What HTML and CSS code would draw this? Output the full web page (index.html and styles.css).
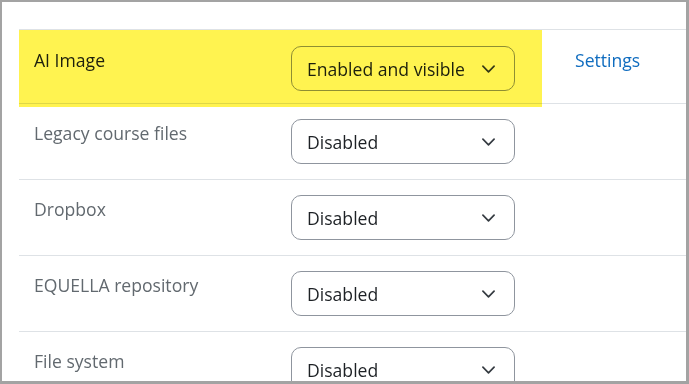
FILE: index.html
```html
<!DOCTYPE html>
<html lang="en">
<head>
    <meta charset="UTF-8">
    <meta name="viewport" content="width=device-width, initial-scale=1.0">
    <title>Manage repositories</title>
    <link rel="stylesheet" href="styles.css">
</head>
<body>
    <div class="frame">
        <div class="plugins">
            <div class="highlight"></div>

            <div class="row row-first">
                <div class="name">AI Image</div>
                <div class="state">
                    <div class="select">
                        <span>Enabled and visible</span>
                        <svg class="chevron" viewBox="0 0 14 8"><path d="M1 1l6 6 6-6"/></svg>
                    </div>
                </div>
                <div class="actions"><a href="#">Settings</a></div>
            </div>

            <div class="row">
                <div class="name muted">Legacy course files</div>
                <div class="state">
                    <div class="select">
                        <span>Disabled</span>
                        <svg class="chevron" viewBox="0 0 14 8"><path d="M1 1l6 6 6-6"/></svg>
                    </div>
                </div>
                <div class="actions"></div>
            </div>

            <div class="row">
                <div class="name muted">Dropbox</div>
                <div class="state">
                    <div class="select">
                        <span>Disabled</span>
                        <svg class="chevron" viewBox="0 0 14 8"><path d="M1 1l6 6 6-6"/></svg>
                    </div>
                </div>
                <div class="actions"></div>
            </div>

            <div class="row">
                <div class="name muted">EQUELLA repository</div>
                <div class="state">
                    <div class="select">
                        <span>Disabled</span>
                        <svg class="chevron" viewBox="0 0 14 8"><path d="M1 1l6 6 6-6"/></svg>
                    </div>
                </div>
                <div class="actions"></div>
            </div>

            <div class="row">
                <div class="name muted">File system</div>
                <div class="state">
                    <div class="select">
                        <span>Disabled</span>
                        <svg class="chevron" viewBox="0 0 14 8"><path d="M1 1l6 6 6-6"/></svg>
                    </div>
                </div>
                <div class="actions"></div>
            </div>
        </div>
    </div>
</body>
</html>
```

FILE: styles.css
```css
body {
    margin: 0;
    font-family: 'Open Sans', 'Noto Sans', Arial, sans-serif;
    font-size: 17.6px;
    color: #1d2125;
    background-color: #fff;
}

.frame {
    box-sizing: border-box;
    width: 689px;
    height: 384px;
    border: solid #a3a3a3;
    border-width: 2px 3px 3px 2px;
    padding: 27px 0 0 17px;
    overflow: hidden;
    background-color: #fff;
}

.plugins {
    position: relative;
    border-top: 1px solid #dee2e6;
}

.highlight {
    position: absolute;
    top: 0;
    left: 0;
    width: 523px;
    height: 77px;
    background-color: #fff350;
    mix-blend-mode: multiply;
    z-index: 2;
    pointer-events: none;
}

.row {
    display: flex;
    height: 75px;
    border-bottom: 1px solid #dee2e6;
}
.row-first {
    height: 73px;
}

.name {
    box-sizing: border-box;
    width: 257px;
    padding: 17px 15px 0;
    line-height: 24px;
}
.name.muted {
    color: #62696f;
}
.row-first .name,
.row-first .actions {
    padding-top: 18px;
}

.state {
    box-sizing: border-box;
    width: 265px;
    padding: 15px 0 0 15px;
}
.row-first .state {
    padding-top: 16px;
}

.select {
    box-sizing: border-box;
    width: 224px;
    height: 45px;
    display: flex;
    align-items: center;
    justify-content: space-between;
    padding: 0 19px 0 15px;
    border: 1px solid #8f959e;
    border-radius: 10px;
    color: #1d2125;
    background-color: #fff;
}

.chevron {
    width: 13px;
    height: 8px;
    fill: none;
    stroke: #343a40;
    stroke-width: 1.8;
    stroke-linecap: round;
    stroke-linejoin: round;
}

.actions {
    padding: 17px 0 0 34px;
    line-height: 24px;
}
.actions a {
    color: #0f6cbf;
    text-decoration: none;
}
```
